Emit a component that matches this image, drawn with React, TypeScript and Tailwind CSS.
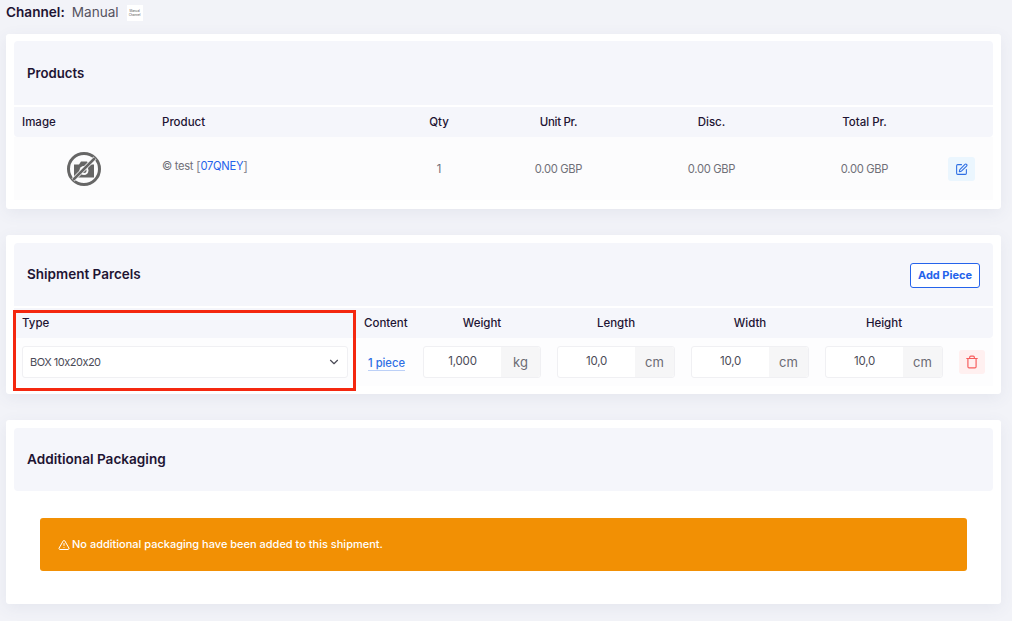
import { ChevronDown, SquarePen, Trash, TriangleAlert } from "lucide-react";

const pieceFields = [
  { value: "1,000", unit: "kg" },
  { value: "10,0", unit: "cm" },
  { value: "10,0", unit: "cm" },
  { value: "10,0", unit: "cm" },
];

function NoImageIcon() {
  return (
    <svg width="36" height="36" viewBox="0 0 36 36" fill="none">
      <circle cx="18" cy="18" r="15.5" stroke="#666666" strokeWidth="3" />
      <path d="M8 13.5h5l2-3h6l2 3h5v13H8z" fill="#666666" />
      <circle cx="18" cy="19.5" r="4.5" fill="#fbfbfc" />
      <circle cx="18" cy="19.5" r="2.5" fill="#666666" />
      <path d="M7 29 29 7" stroke="#fbfbfc" strokeWidth="4" />
      <path d="M7 29 29 7" stroke="#666666" strokeWidth="2.5" />
    </svg>
  );
}

function PieceField({ value, unit }: { value: string; unit: string }) {
  return (
    <div className="flex h-[32px] w-[118px] rounded-[3px] border border-[#f0f0f3] bg-white">
      <div className="flex flex-1 items-center justify-center text-[11.5px] tracking-[-0.2px] text-[#4b4b57]">{value}</div>
      <div className="flex w-[39px] items-center justify-center rounded-r-[3px] bg-[#f6f6f7] pt-[1px] text-[13px] text-[#6b6b73]">{unit}</div>
    </div>
  );
}

export default function App() {
  return (
    <div className="h-[621px] overflow-hidden bg-[#f2f3f8] px-[6px] font-[Inter,sans-serif] text-[#1e1433]">
      <div className="flex h-[34px] items-start pt-[4px]">
        <span className="text-[13.6px] leading-[16px] font-semibold">Channel:</span>
        <span className="ml-[7px] text-[13.6px] leading-[16px] text-[#55525f]">Manual</span>
        <div className="mt-[1px] ml-[8px] flex h-[16px] w-[16px] flex-col items-center justify-center bg-white text-[3px] leading-[4px] text-[#555555]">
          <span>Manual</span>
          <span>Channel</span>
        </div>
      </div>

      <section className="h-[175px] w-[995px] rounded-[3px] bg-white px-[8px] pt-[7px] shadow-[0_4px_16px_rgba(80,90,130,0.08)]">
        <div className="flex h-[64px] items-center rounded-t-[4px] bg-[#f5f6fb] px-[13px] pt-[2px] text-[13.2px] font-semibold">Products</div>
        <div className="mt-[2px] grid h-[30px] grid-cols-[140px_242px_86px_153px_153px_153px_52px] items-center rounded-b-[4px] bg-[#f5f6fb] pt-[2px] text-[11.5px] font-medium">
          <div className="pl-[8px]">Image</div>
          <div className="pl-[8px]">Product</div>
          <div className="text-center">Qty</div>
          <div className="text-center tracking-[-0.3px]">Unit Pr.</div>
          <div className="text-center">Disc.</div>
          <div className="text-center">Total Pr.</div>
          <div />
        </div>
        <div className="grid h-[63px] grid-cols-[140px_242px_86px_153px_153px_153px_52px] items-center bg-[#fcfcfd] pt-[1px] text-[11.2px] tracking-[-0.3px] text-[#6f6f78]">
          <div className="flex justify-center"><NoImageIcon /></div>
          <div className="flex items-center pb-[6px] pl-[8px]">
            <span>© test&nbsp;</span>
            <span className="text-[13px] leading-[14px] text-[#8b8b93]">[</span>
            <span className="text-[#2563eb]">07QNEY</span>
            <span className="text-[13px] leading-[14px] text-[#8b8b93]">]</span>
          </div>
          <div className="text-center">1</div>
          <div className="text-center">0.00 GBP</div>
          <div className="text-center">0.00 GBP</div>
          <div className="text-center">0.00 GBP</div>
          <div className="pl-[7px]">
            <button className="flex h-[24px] w-[27px] items-center justify-center rounded-[3px] bg-[#ebf6fe] text-[#2f6fe4]">
              <SquarePen size={13} />
            </button>
          </div>
        </div>
      </section>

      <section className="mt-[26px] h-[159px] w-[995px] rounded-[3px] bg-white px-[8px] pt-[8px] shadow-[0_4px_16px_rgba(80,90,130,0.08)]">
        <div className="flex h-[63px] items-center justify-between rounded-t-[4px] bg-[#f5f6fb] pr-[13px] pl-[13px]">
          <span className="text-[13.5px] font-semibold">Shipment Parcels</span>
          <button className="mt-[1px] h-[25px] w-[70px] rounded-[3px] border border-[#2563eb] bg-white text-[11px] font-bold text-[#2563eb]">Add Piece</button>
        </div>
        <div className="relative mt-[2px]">
          <div className="grid h-[30px] grid-cols-[342px_59px_134px_134px_134px_134px_42px] items-center rounded-b-[4px] bg-[#f5f6fb] pt-[2px] text-[11.5px] font-medium">
            <div className="pl-[8px]">Type</div>
            <div className="pl-[8px]">Content</div>
            <div className="text-center">Weight</div>
            <div className="text-center">Length</div>
            <div className="text-center">Width</div>
            <div className="text-center">Height</div>
            <div />
          </div>
          <div className="grid h-[48px] grid-cols-[342px_59px_134px_134px_134px_134px_42px] items-center bg-[#fdfdfe]">
            <div className="px-[8px]">
              <div className="flex h-[32px] items-center justify-between rounded-[3px] border border-[#f0f0f3] bg-white pr-[6px] pl-[7px] text-[11px] tracking-[-0.5px] text-[#4b4b57] [font-feature-settings:'calt'_0]">
                <span>BOX 10x20x20</span>
                <ChevronDown size={14} className="text-[#4b4b57]" />
              </div>
            </div>
            <div className="pb-[3px] pl-[12px]">
              <span className="border-b border-[#bcd0f7] text-[11.2px] leading-[14px] font-medium text-[#2f6fe4]">1 piece</span>
            </div>
            {pieceFields.map((field, index) => (
              <div key={index} className="flex justify-center">
                <PieceField value={field.value} unit={field.unit} />
              </div>
            ))}
            <div className="flex justify-center">
              <button className="flex h-[24px] w-[26px] items-center justify-center rounded-[3px] bg-[#fff0f0] text-[#f75c5c]">
                <Trash size={14} />
              </button>
            </div>
          </div>
          <div className="absolute top-[2px] left-[-1px] h-[81px] w-[343px] border-[3px] border-[#f4270f]" />
        </div>
      </section>

      <section className="mt-[26px] h-[184px] w-[995px] rounded-[3px] bg-white px-[8px] pt-[8px] shadow-[0_4px_16px_rgba(80,90,130,0.08)]">
        <div className="flex h-[63px] items-center rounded-[4px] bg-[#f5f6fb] px-[13px] text-[13.6px] font-semibold">Additional Packaging</div>
        <div className="mx-[26px] mt-[27px] flex h-[53px] items-center gap-[2px] rounded-[3px] bg-[#f29004] pr-[19px] pl-[18px] text-[11px] font-medium text-white">
          <TriangleAlert size={12} />
          <span>No additional packaging have been added to this shipment.</span>
        </div>
      </section>
    </div>
  );
}
